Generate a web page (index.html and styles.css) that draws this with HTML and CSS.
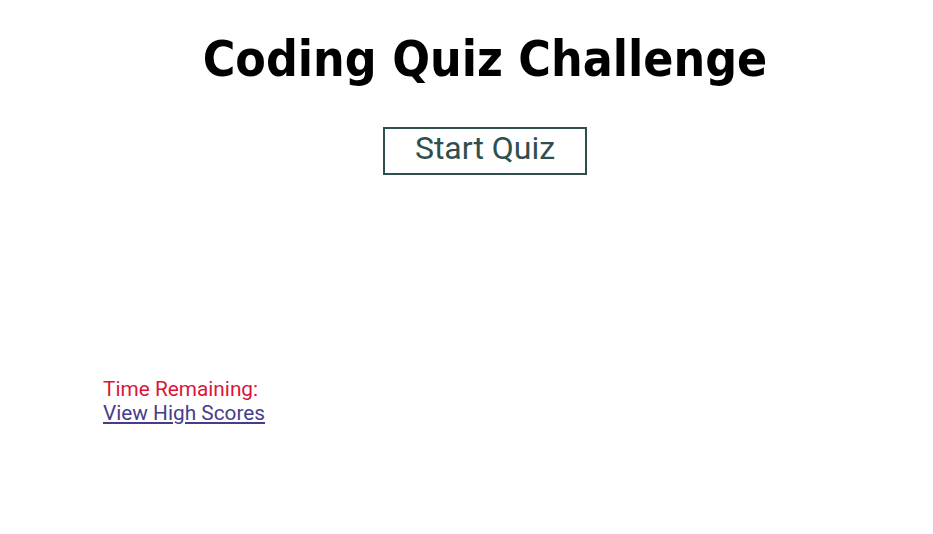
FILE: index.html
```html
<!DOCTYPE html>
<html lang="en">
  <head>
    <meta charset="UTF-8" />
    <title>Coding Quiz Challenge</title>
    <meta name="viewport" content="width=device-width, initial-scale=1.0" />
    <link rel="stylesheet" href="styles.css">
  </head>
  <body>
    <div class="container">
      <h1>Coding Quiz Challenge</h1>
      <button class="start-btn" id="start">Start Quiz</button>
      <div class="quiz-area"></div>
    </div>
    <div class="footer">
      <div class="timer">Time Remaining: <span id="time"></span></div>
      <a href="#" class="scores-link">View High Scores</a>
    </div>
  </body>
</html>
```

FILE: styles.css
```css
body {
  margin: 0;
  font-family: Roboto, sans-serif;
  background-color: #fff;
  color: #111;
}
.container {
  text-align: center;
  padding-top: 30px;
  padding-left: 37px;
}
h1 {
  font-family: 'DejaVu Sans Condensed', 'DejaVu Sans', sans-serif;
  font-weight: bold;
  font-size: 49.5px;
  margin: 0 0 39px;
  color: #000;
}
.start-btn {
  font-family: Roboto, sans-serif;
  font-size: 32px;
  line-height: normal;
  color: darkslategray;
  background: #fff;
  border: 2px solid darkslategray;
  padding: 0 30px 6px;
  cursor: pointer;
}
.quiz-area {
  height: 202px;
}
.footer {
  padding-left: 103px;
  font-size: 20.8px;
}
.timer {
  color: crimson;
}
.scores-link {
  color: darkslateblue;
}
```
